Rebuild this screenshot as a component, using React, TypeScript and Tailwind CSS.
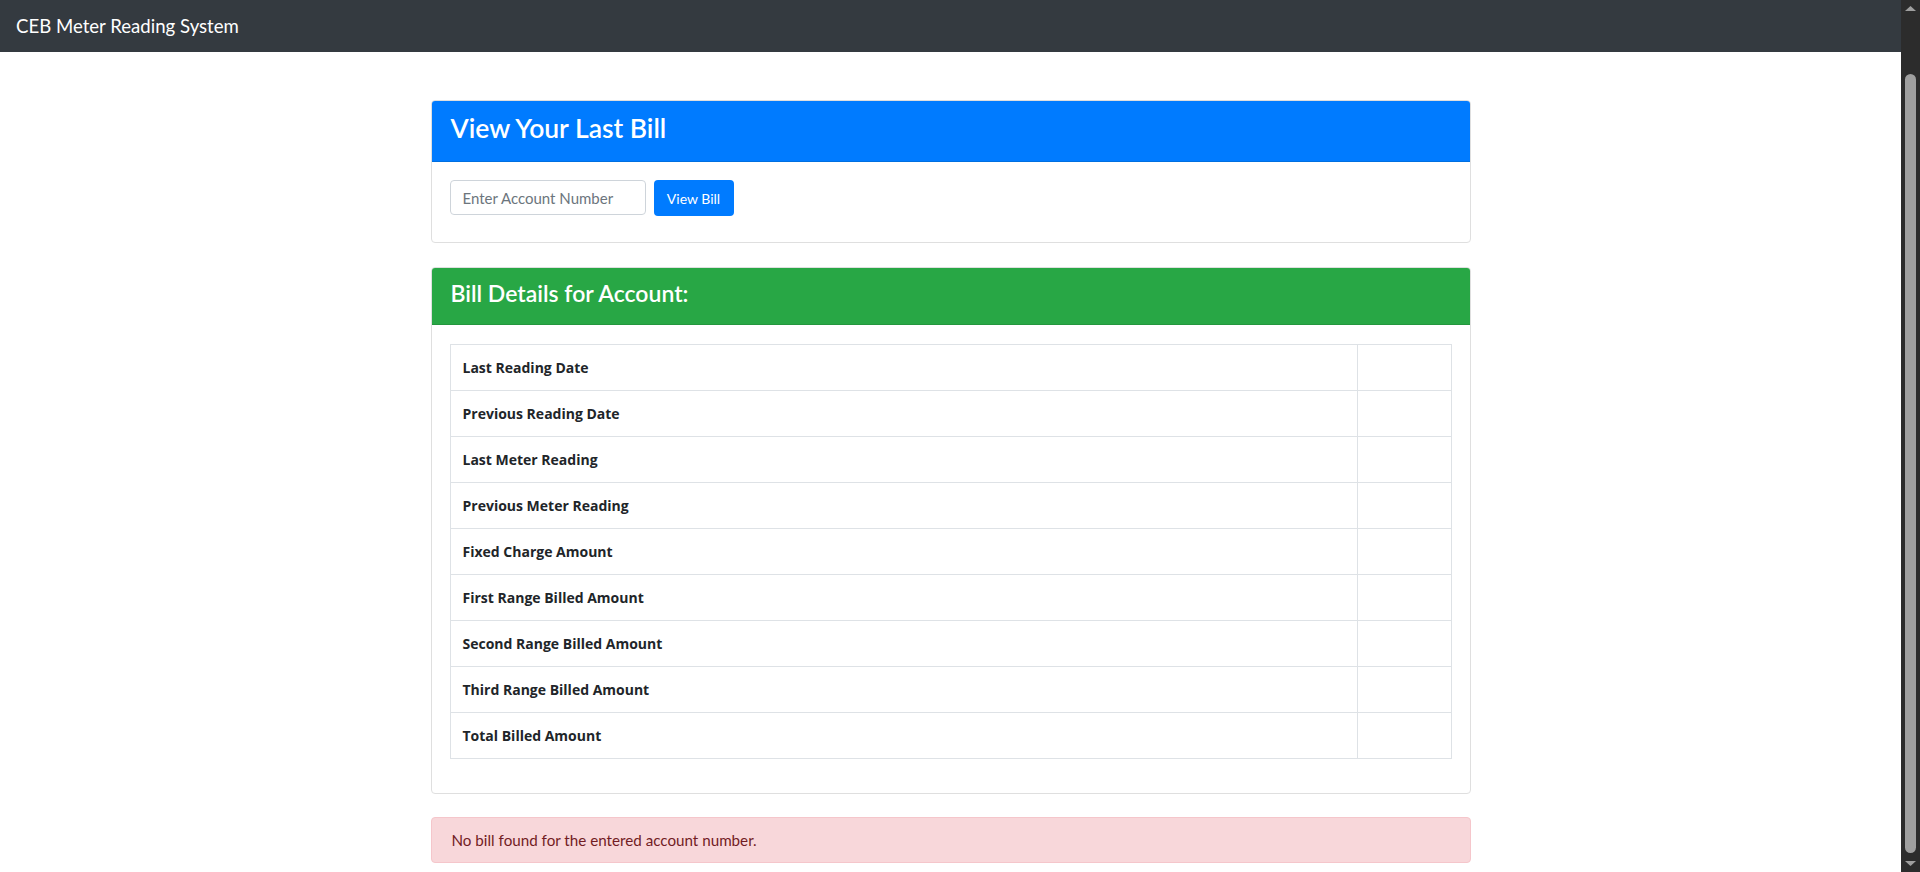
import React, { useState } from "react";

const rows = [
  "Last Reading Date",
  "Previous Reading Date",
  "Last Meter Reading",
  "Previous Meter Reading",
  "Fixed Charge Amount",
  "First Range Billed Amount",
  "Second Range Billed Amount",
  "Third Range Billed Amount",
  "Total Billed Amount",
];

// fake window scrollbar as seen in the screenshot
const ScrollBar: React.FC = () => (
  <div className="w-[19px] h-full bg-[#2c2c2c] flex flex-col items-center">
    <svg width="19" height="17" viewBox="0 0 19 17" className="shrink-0">
      <path d="M4 11 L9.5 6 L15 11 Z" fill="#9f9f9f" />
    </svg>
    <div className="flex-1 w-full flex flex-col px-[4px] pt-[57px] pb-[2px]">
      <div className="flex-1 bg-[#9f9f9f] rounded-full"></div>
    </div>
    <svg width="19" height="17" viewBox="0 0 19 17" className="shrink-0">
      <path d="M4 6 L9.5 11 L15 6 Z" fill="#9f9f9f" />
    </svg>
  </div>
);

const App: React.FC = () => {
  const [account, setAccount] = useState("");

  return (
    <div className="h-screen flex bg-white text-[#212529]" style={{ fontFamily: "Lato, 'Open Sans', sans-serif" }}>
      <div className="flex-1 min-w-0 overflow-hidden">
        {/* Navbar */}
        <nav className="h-[52px] bg-[#343a40] px-4 flex items-center">
          <span className="text-white text-[18.6px] leading-none">CEB Meter Reading System</span>
        </nav>

        <div className="w-[1040px] mx-auto pt-[48px] pb-[76px]">
          {/* View bill card */}
          <div className="border border-[#dfdfdf] rounded-[4px] overflow-hidden">
            <div className="h-[61px] bg-[#007bff] border-b border-[#006fe0] px-[19px] pb-[6px] flex items-center">
              <h3 className="text-white text-[26.5px] font-semibold leading-none">View Your Last Bill</h3>
            </div>
            <div className="h-[80px] px-[18px] pt-[18px] flex items-start gap-2">
              <input
                value={account}
                onChange={(e) => setAccount(e.target.value)}
                placeholder="Enter Account Number"
                className="w-[196px] h-[35px] border border-[#ced4da] rounded-[4px] px-3 text-[15px] text-[#495057] placeholder:text-[#6c757d] outline-none"
              />
              <button className="w-[80px] h-[36px] bg-[#007bff] text-white text-[14px] rounded-[4px]">
                View Bill
              </button>
            </div>
          </div>

          {/* Bill details card */}
          <div className="mt-6 border border-[#dfdfdf] rounded-[4px] overflow-hidden">
            <div className="h-[57px] bg-[#28a745] border-b border-[#24963e] px-[19px] pb-[5px] flex items-center">
              <h4 className="text-white text-[23px] font-semibold leading-none">Bill Details for Account:</h4>
            </div>
            <div className="px-[18px] pt-[19px] pb-[34px]">
              <table className="w-full border-collapse">
                <tbody>
                  {rows.map((label) => (
                    <tr key={label}>
                      <td
                        className="border border-[#dee2e6] px-3 py-3 text-[14px] leading-[21px] font-bold"
                        style={{ fontFamily: "'Open Sans', Lato, sans-serif" }}
                      >
                        {label}
                      </td>
                      <td className="border border-[#dee2e6] w-[94px]"></td>
                    </tr>
                  ))}
                </tbody>
              </table>
            </div>
          </div>

          {/* Alert */}
          <div className="mt-[23px] h-[46px] border border-[#f5c6cb] bg-[#f8d7da] text-[#721c24] rounded-[4px] px-5 flex items-center text-[15.2px]">
            No bill found for the entered account number.
          </div>
        </div>
      </div>
      <ScrollBar />
    </div>
  );
};

export default App;
